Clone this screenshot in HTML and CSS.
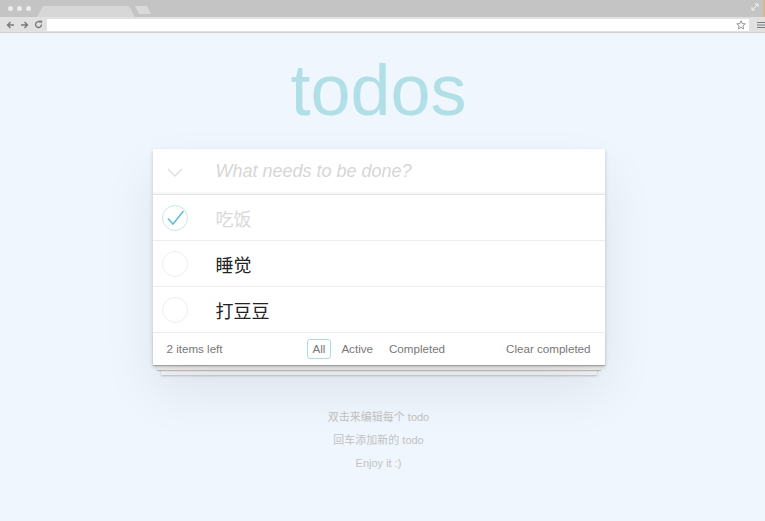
FILE: index.html
```html
<!DOCTYPE html>
<html lang="zh">
<head>
<meta charset="utf-8">
<title>todos</title>
<link rel="stylesheet" href="styles.css">
</head>
<body>
<div class="browser">
  <div class="tabbar">
    <div class="dots"><span></span><span></span><span></span></div>
    <svg class="tab" width="100" height="11" viewBox="0 0 100 11"><polygon points="0,11 6,0 92,0 98,11" fill="#d7d7d7"/></svg>
    <svg class="newtab" width="18" height="9" viewBox="0 0 18 9"><polygon points="0,0 12,0 16,8 4,8" fill="#d9d9d9"/></svg>
    <div class="spacer"></div>
    <svg class="expand" width="8" height="8" viewBox="0 0 8 8"><path d="M1 7 L7 1 M4 1 H7 V4 M1 4 V7 H4" stroke="#f2f2f2" stroke-width="1" fill="none"/></svg>
  </div>
  <div class="toolbar">
    <svg class="nav" width="9" height="8" viewBox="0 0 9 8"><path d="M8 4 H1.5 M4.5 1 L1.5 4 L4.5 7" stroke="#7a7a7a" stroke-width="1.4" fill="none"/></svg>
    <svg class="nav" width="9" height="8" viewBox="0 0 9 8"><path d="M1 4 H7.5 M4.5 1 L7.5 4 L4.5 7" stroke="#7a7a7a" stroke-width="1.4" fill="none"/></svg>
    <svg class="nav" width="9" height="9" viewBox="0 0 9 9"><path d="M7.5 4.5 A3 3 0 1 1 6.4 2.2" stroke="#7a7a7a" stroke-width="1.4" fill="none"/><polygon points="5,0.5 8.3,0.8 7.6,3.8" fill="#7a7a7a"/></svg>
    <div class="address">
      <svg class="star" width="10" height="10" viewBox="0 0 10 10"><polygon points="5,0.8 6.2,3.6 9.2,3.8 6.9,5.8 7.6,8.9 5,7.3 2.4,8.9 3.1,5.8 0.8,3.8 3.8,3.6" fill="none" stroke="#8a8a8a" stroke-width="0.9"/></svg>
    </div>
    <svg class="menu" width="8" height="8" viewBox="0 0 8 8"><path d="M0 1.5 H8 M0 4 H8 M0 6.5 H8" stroke="#7a7a7a" stroke-width="1.2"/></svg>
  </div>
</div>
<div class="page">
  <h1 class="title">todos</h1>
  <section class="todoapp">
    <header class="new-row">
      <svg class="toggle-all" width="16" height="9" viewBox="0 0 16 9"><polyline points="1,1 8,8 15,1" fill="none" stroke="#dedede" stroke-width="1.3"/></svg>
      <span class="placeholder">What needs to be done?</span>
    </header>
    <ul class="list">
      <li class="item done">
        <span class="check"><svg width="26" height="26" viewBox="0 0 26 26"><polyline points="6,13.5 11,19 21.5,6" fill="none" stroke="#62c0d2" stroke-width="1.6"/></svg></span>
        <span class="label">吃饭</span>
      </li>
      <li class="item">
        <span class="check"></span>
        <span class="label">睡觉</span>
      </li>
      <li class="item">
        <span class="check"></span>
        <span class="label">打豆豆</span>
      </li>
    </ul>
    <footer class="foot">
      <span class="count">2 items left</span>
      <div class="filters">
        <span class="filter selected">All</span>
        <span class="filter">Active</span>
        <span class="filter">Completed</span>
      </div>
      <span class="clear">Clear completed</span>
    </footer>
  </section>
  <div class="info">
    <p>双击来编辑每个 todo</p>
    <p>回车添加新的 todo</p>
    <p>Enjoy it :)</p>
  </div>
</div>
</body>
</html>
```

FILE: styles.css
```css
* { box-sizing: border-box; }
html, body { margin: 0; padding: 0; }
body {
  width: 765px;
  height: 521px;
  overflow: hidden;
  background: #eff6fe;
  font-family: "Liberation Sans", Arial, "Noto Sans CJK SC", sans-serif;
}
.browser { width: 765px; }
.tabbar {
  height: 17px;
  background: #c4c4c4;
  display: flex;
  align-items: flex-end;
  border-right: 2px solid #d9b98a;
}
.dots {
  display: flex;
  gap: 4px;
  padding: 0 0 6px 8px;
  align-self: flex-end;
}
.dots span {
  width: 5px;
  height: 5px;
  border-radius: 50%;
  background: #ececec;
}
.tab { margin-left: 6px; display: block; }
.newtab { margin-left: -2px; margin-bottom: 2px; display: block; }
.spacer { flex: 1; }
.expand { display: block; margin: 0 4px 6px 0; align-self: flex-end; }
.toolbar {
  height: 16px;
  background: #e1e1e1;
  border-bottom: 1px solid #cfcfcf;
  display: flex;
  align-items: center;
  padding-left: 6px;
  gap: 5px;
}
.nav { display: block; }
.address {
  margin-left: -1px;
  width: 702px;
  height: 12px;
  background: #ffffff;
  display: flex;
  align-items: center;
  justify-content: flex-end;
  padding-right: 3px;
}
.star { display: block; }
.menu { display: block; margin-left: 3px; }

.page {
  display: flex;
  flex-direction: column;
  align-items: center;
  padding-right: 8px;
}
.title {
  margin: 21px 0 0;
  font-family: "Liberation Sans", Arial, sans-serif;
  font-weight: normal;
  font-size: 72px;
  line-height: 72px;
  height: 72px;
  color: #b0dfe6;
}
.todoapp {
  margin-top: 23px;
  width: 452px;
  background: #fff;
  position: relative;
  box-shadow: 0 2px 4px rgba(0,0,0,0.18), 0 25px 50px rgba(0,0,0,0.08);
}
.new-row {
  height: 46px;
  border-bottom: 1px solid #e3e3e3;
  box-shadow: inset 0 -2px 1px rgba(0,0,0,0.03);
  display: flex;
  align-items: center;
}
.toggle-all { display: block; margin-left: 14px; margin-top: 2px; }
.placeholder {
  margin-left: 33px;
  font-style: italic;
  font-size: 18px;
  color: #d6d6d6;
}
.list { list-style: none; margin: 0; padding: 0; }
.item {
  height: 46px;
  border-bottom: 1px solid #ededed;
  display: flex;
  align-items: center;
}
.check {
  width: 26px;
  height: 26px;
  margin-left: 9px;
  border: 1px solid #ededed;
  border-radius: 50%;
  position: relative;
}
.done .check { border-color: #c9e6ea; }
.check svg { position: absolute; left: -1px; top: -1px; display: block; }
.label {
  margin-left: 28px;
  font-family: "Noto Sans CJK SC", sans-serif;
  font-size: 18px;
  color: #222;
}
.done .label { color: #d9d9d9; }
.foot {
  height: 32px;
  display: flex;
  align-items: center;
  padding: 0 14px;
  font-size: 11.6px;
  line-height: 14px;
  color: #777;
  position: relative;
}
.foot::before {
  content: "";
  position: absolute;
  left: 0;
  right: 0;
  bottom: 0;
  height: 32px;
  z-index: -1;
  box-shadow: 0 1px 1px rgba(0,0,0,0.2),
              0 9px 0 -4px #f6f6f6,
              0 10px 1px -4px rgba(0,0,0,0.22),
              0 18px 0 -8px #f6f6f6,
              0 19px 2px -8px rgba(0,0,0,0.22);
}
.count { width: 140px; }
.filters { display: flex; gap: 4px; margin-left: 0; }
.filter {
  padding: 2px 5px;
  border: 1px solid transparent;
  border-radius: 3px;
}
.filter.selected { border-color: #a9dbe3; }
.clear { margin-left: auto; }
.info {
  margin-top: 41px;
  text-align: center;
  font-size: 11px;
  color: #c2c2c2;
  font-family: "Liberation Sans", Arial, "Noto Sans CJK SC", sans-serif;
}
.info p { margin: 0; line-height: 23px; }
```
